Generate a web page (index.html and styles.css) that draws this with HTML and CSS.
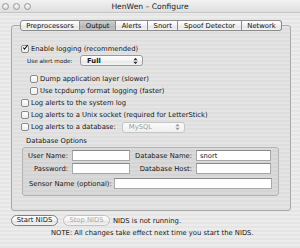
FILE: index.html
```html
<!DOCTYPE html>
<html lang="en">
<head>
    <meta charset="UTF-8">
    <title>HenWen - Configure</title>
    <link rel="stylesheet" href="styles.css">
</head>
<body>
    <div class="window">
        <div class="titlebar">
            <div class="lights">
                <span class="light"></span>
                <span class="light"></span>
                <span class="light"></span>
            </div>
            <div class="title">HenWen – Configure</div>
            <div></div>
        </div>

        <div class="content">
            <div class="tabbox">
                <div class="tabs">
                    <div class="tab">Preprocessors</div>
                    <div class="tab active">Output</div>
                    <div class="tab">Alerts</div>
                    <div class="tab">Snort</div>
                    <div class="tab">Spoof Detector</div>
                    <div class="tab">Network</div>
                </div>

                <div class="pane">
                    <div class="row first">
                        <span class="check checked">
                            <svg viewBox="0 0 10 10" width="9" height="9"><path d="M2 5 L4.2 7.6 L9.5 0.8" fill="none" stroke="#111" stroke-width="1.8"/></svg>
                        </span>
                        Enable logging (recommended)
                    </div>
                    <div class="row mode">
                        <span class="small">Use alert mode:</span>
                        <div class="popup full">
                            <span>Full</span>
                            <svg class="arrows" viewBox="0 0 6 9" width="5" height="8"><path d="M3 0.5 L5.5 3.5 L0.5 3.5 Z M3 8.5 L5.5 5.5 L0.5 5.5 Z" fill="#333"/></svg>
                        </div>
                    </div>
                    <div class="row indent gap">
                        <span class="check"></span>
                        Dump application layer (slower)
                    </div>
                    <div class="row indent">
                        <span class="check"></span>
                        Use tcpdump format logging (faster)
                    </div>
                    <div class="row">
                        <span class="check"></span>
                        Log alerts to the system log
                    </div>
                    <div class="row">
                        <span class="check"></span>
                        Log alerts to a Unix socket (required for LetterStick)
                    </div>
                    <div class="row">
                        <span class="check"></span>
                        Log alerts to a database:
                        <div class="popup mysql disabled">
                            <span>MySQL</span>
                            <svg class="arrows" viewBox="0 0 6 9" width="5" height="8"><path d="M3 0.5 L5.5 3.5 L0.5 3.5 Z M3 8.5 L5.5 5.5 L0.5 5.5 Z" fill="#999"/></svg>
                        </div>
                    </div>

                    <div class="group-label">Database Options</div>
                    <div class="group">
                        <div class="fields">
                            <div class="label">User Name:</div>
                            <div class="field"></div>
                            <div class="label">Database Name:</div>
                            <div class="field">snort</div>
                            <div class="label">Password:</div>
                            <div class="field"></div>
                            <div class="label">Database Host:</div>
                            <div class="field"></div>
                        </div>
                        <div class="sensor">
                            <div class="label">Sensor Name (optional):</div>
                            <div class="field wide"></div>
                        </div>
                    </div>
                </div>
            </div>

            <div class="footer">
                <div class="button">Start NIDS</div>
                <div class="button disabled">Stop NIDS</div>
                <span class="status">NIDS is not running.</span>
            </div>
            <div class="note">NOTE: All changes take effect next time you start the NIDS.</div>
        </div>
    </div>
</body>
</html>
```

FILE: styles.css
```css
* {
    margin: 0;
    padding: 0;
    box-sizing: border-box;
}

body {
    font-family: 'DejaVu Sans', 'Liberation Sans', sans-serif;
    font-size: 6.8px;
    color: #161616;
    background: #e9e9e9;
}

.window {
    width: 300px;
    height: 248px;
    background: repeating-linear-gradient(180deg, #ececec 0px, #ececec 2px, #e5e5e5 2px, #e5e5e5 4px);
}

/* title bar */
.titlebar {
    height: 13px;
    display: grid;
    grid-template-columns: 1fr auto 1fr;
    align-items: center;
    background: linear-gradient(#f2f2f2, #dedede);
    border-bottom: 1px solid #c4c4c4;
}

.lights {
    display: flex;
    gap: 4px;
    padding-left: 2px;
}

.light {
    width: 7px;
    height: 7px;
    border-radius: 50%;
    border: 1px solid #9b9b9b;
    background: radial-gradient(circle at 50% 35%, #fbfbfb, #cfcfcf);
}

.title {
    font-size: 7.6px;
    color: #222;
}

/* tabs */
.content {
    padding: 12px 9px 0 11px;
}

.tabbox {
    height: 186px;
    border: 1px solid #a9a9a9;
    border-radius: 3px;
    background: repeating-linear-gradient(180deg, #e4e4e4 0px, #e4e4e4 2px, #dedede 2px, #dedede 4px);
}

.tabs {
    display: flex;
    justify-content: center;
    margin-top: -6px;
}

.tab {
    height: 11px;
    line-height: 10px;
    padding: 0 5.6px;
    border: 1px solid #8c8c8c;
    border-left: none;
    background: linear-gradient(#ffffff, #f1f1f1 50%, #e4e4e4 51%, #f2f2f2);
    color: #111;
}

.tab:first-child {
    border-left: 1px solid #8c8c8c;
    border-radius: 3px 0 0 3px;
}

.tab:last-child {
    border-radius: 0 3px 3px 0;
}

.tab.active {
    background: linear-gradient(#cfcfcf, #bdbdbd 50%, #b0b0b0 51%, #c2c2c2);
}

/* pane */
.pane {
    padding: 0 11px 0 9px;
}

.row {
    height: 12px;
    display: flex;
    align-items: center;
    white-space: nowrap;
}

.row.first {
    margin-top: 12px;
}

.row.mode {
    height: 11px;
    padding-left: 6px;
}

.row.indent {
    padding-left: 9px;
}

.row.gap {
    margin-top: 7px;
}

.check {
    width: 8px;
    height: 8px;
    margin-right: 2px;
    border: 1px solid #8a8a8a;
    border-radius: 2px;
    background: linear-gradient(#ffffff, #ededed);
    display: flex;
    align-items: flex-end;
    flex-shrink: 0;
}

.check svg {
    margin: -3px 0 0 0;
}

.small {
    font-size: 5.7px;
    width: 53px;
}

.popup {
    height: 11px;
    display: flex;
    align-items: center;
    justify-content: space-between;
    padding: 0 4px 0 6px;
    border: 1px solid #9a9a9a;
    border-radius: 3px;
    background: linear-gradient(#ffffff, #f4f4f4 50%, #e6e6e6 51%, #f4f4f4);
}

.popup.full {
    width: 63px;
    font-weight: bold;
}

.popup.mysql {
    width: 63px;
    margin-left: 6px;
}

.popup.disabled {
    border-color: #c6c6c6;
    color: #9c9c9c;
    background: linear-gradient(#fafafa, #efefef);
}

/* database options */
.group-label {
    height: 12px;
    line-height: 12px;
    margin-top: 2px;
    padding-left: 5px;
}

.group {
    margin-left: 1px;
    height: 49px;
    border: 1px solid #b3b3b3;
    border-radius: 3px;
    padding: 2px 6px 0 0;
    background: repeating-linear-gradient(180deg, #dadada 0px, #dadada 2px, #d4d4d4 2px, #d4d4d4 4px);
}

.fields {
    display: grid;
    grid-template-columns: 49px 58px 66px 75px;
    row-gap: 2px;
    align-items: center;
}

.label {
    text-align: right;
    padding-right: 4px;
    white-space: nowrap;
}

.field {
    height: 11px;
    line-height: 10px;
    padding-left: 3px;
    background: #fff;
    border: 1px solid #a8a8a8;
    border-top-color: #8a8a8a;
}

.sensor {
    margin-top: 4px;
    display: flex;
    align-items: center;
    padding-left: 6px;
}

.sensor .label {
    width: 85px;
    text-align: left;
}

.field.wide {
    flex: 1;
}

/* footer */
.footer {
    margin-top: 4px;
    display: flex;
    align-items: center;
    gap: 5px;
}

.button {
    height: 11px;
    width: 47px;
    line-height: 9px;
    text-align: center;
    border: 1px solid #7f7f7f;
    border-radius: 6px;
    background: linear-gradient(#ffffff, #f3f3f3 50%, #e2e2e2 51%, #f3f3f3);
}

.button.disabled {
    border-color: #c2c2c2;
    color: #a8a8a8;
}

.status {
    margin-left: -2px;
}

.note {
    margin-top: 3px;
    padding-left: 40px;
}
```
